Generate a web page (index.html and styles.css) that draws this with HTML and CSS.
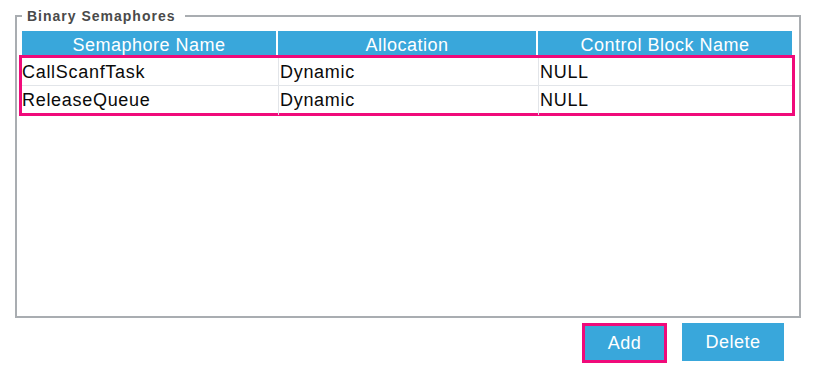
FILE: index.html
```html
<!DOCTYPE html>
<html lang="en">
<head>
    <meta charset="UTF-8">
    <meta name="viewport" content="width=device-width, initial-scale=1.0">
    <title>Binary Semaphores</title>
    <link rel="stylesheet" href="styles.css">
</head>
<body>
    <fieldset class="group">
        <legend>Binary Semaphores</legend>
        <div class="grid-head">
            <div class="hcell">Semaphore Name</div>
            <div class="hcell">Allocation</div>
            <div class="hcell">Control Block Name</div>
        </div>
        <div class="rows">
            <div class="row">
                <div class="cell c1">CallScanfTask</div>
                <div class="cell c2">Dynamic</div>
                <div class="cell c3">NULL</div>
            </div>
            <div class="row">
                <div class="cell c1">ReleaseQueue</div>
                <div class="cell c2">Dynamic</div>
                <div class="cell c3">NULL</div>
            </div>
        </div>
    </fieldset>
    <div class="actions">
        <button class="btn btn-add">Add</button>
        <button class="btn">Delete</button>
    </div>
</body>
</html>
```

FILE: styles.css
```css
body {
    margin: 0;
    background-color: #fff;
    font-family: "Liberation Sans", Arial, sans-serif;
    color: #0a0a0a;
}
.group {
    box-sizing: border-box;
    margin: 7px 0 0 15px;
    width: 782px;
    height: 311px;
    padding: 6px 4px 0 5px;
    border: 2px solid #a9adb1;
}
.group legend {
    margin-left: 0;
    padding: 0 9px 0 5px;
    font-size: 14px;
    line-height: 18px;
    font-weight: bold;
    letter-spacing: 1px;
    color: #4a4a4a;
}
.grid-head {
    display: grid;
    grid-template-columns: 254px 258px 254px;
    column-gap: 2px;
    width: 770px;
}
.hcell {
    background-color: #39a7db;
    color: #fff;
    text-align: center;
    font-size: 18px;
    letter-spacing: 0.5px;
    height: 24px;
    line-height: 28px;
}
.rows {
    width: 770px;
    margin-left: -3px;
    border: 3px solid #f00a7a;
}
.row {
    display: grid;
    grid-template-columns: 256px 260px 1fr;
    height: 27px;
}
.row + .row {
    border-top: 1px solid #e2e5e9;
}
.cell {
    font-size: 18px;
    letter-spacing: 0.7px;
    line-height: 29px;
    white-space: nowrap;
}
.c1 {
    padding-left: 0;
}
.c2, .c3 {
    border-left: 1px solid #e2e5e9;
    padding-left: 1px;
}
.actions {
    display: flex;
    justify-content: flex-end;
    align-items: flex-start;
    gap: 15px;
    padding: 5px 30px 0 0;
}
.btn {
    box-sizing: border-box;
    width: 102px;
    height: 38px;
    padding: 0;
    border: none;
    background-color: #39a7db;
    color: #fff;
    font-family: "Liberation Sans", Arial, sans-serif;
    font-size: 18px;
    letter-spacing: 0.5px;
    cursor: pointer;
}
.btn-add {
    width: 85px;
    height: 40px;
    border: 3px solid #f00a7a;
}
```
